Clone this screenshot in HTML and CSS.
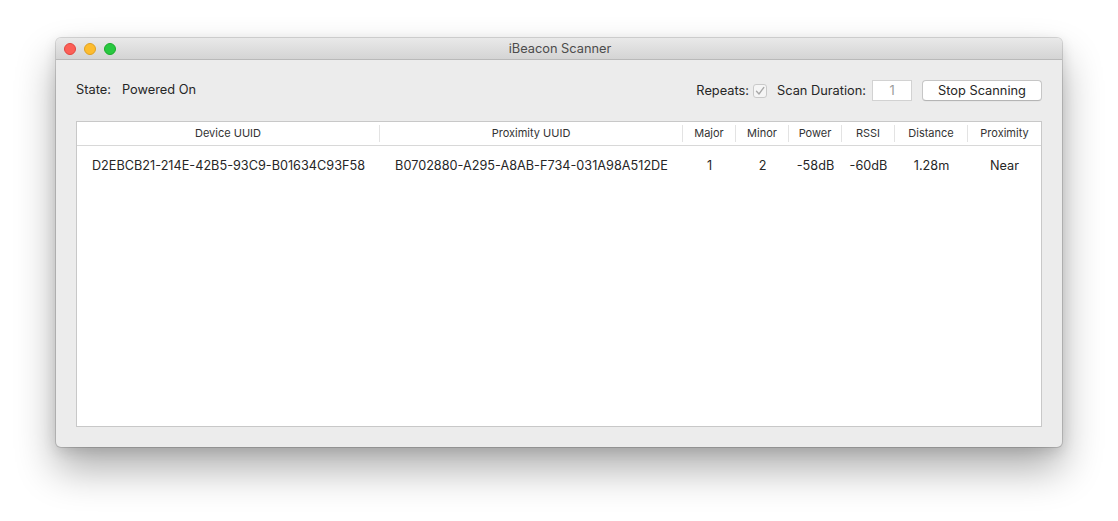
FILE: index.html
```html
<!DOCTYPE html>
<html>
<head>
<meta charset="utf-8">
<link rel="stylesheet" href="styles.css">
</head>
<body>
<div class="window">
  <div class="titlebar">
    <div class="lights">
      <span class="light red"></span>
      <span class="light yellow"></span>
      <span class="light green"></span>
    </div>
    <div class="title">iBeacon Scanner</div>
  </div>
  <div class="content">
    <div class="controls">
      <div class="state">
        <span class="label">State:</span>
        <span class="value">Powered On</span>
      </div>
      <div class="right">
        <span class="label">Repeats:</span>
        <span class="checkbox">
          <svg width="10" height="10" viewBox="0 0 10 10"><path d="M1.5 5.2 L4 8 L8.8 1.5" fill="none" stroke="#a8a8a8" stroke-width="1.3" stroke-linecap="round" stroke-linejoin="round"/></svg>
        </span>
        <span class="label dur">Scan Duration:</span>
        <span class="input">1</span>
        <button class="btn">Stop Scanning</button>
      </div>
    </div>
    <div class="table">
      <div class="row head">
        <div class="c c1">Device UUID</div>
        <div class="c c2">Proximity UUID</div>
        <div class="c c3">Major</div>
        <div class="c c4">Minor</div>
        <div class="c c5">Power</div>
        <div class="c c6">RSSI</div>
        <div class="c c7">Distance</div>
        <div class="c c8">Proximity</div>
      </div>
      <div class="row data">
        <div class="c c1">D2EBCB21-214E-42B5-93C9-B01634C93F58</div>
        <div class="c c2">B0702880-A295-A8AB-F734-031A98A512DE</div>
        <div class="c c3">1</div>
        <div class="c c4">2</div>
        <div class="c c5">-58dB</div>
        <div class="c c6">-60dB</div>
        <div class="c c7">1.28m</div>
        <div class="c c8">Near</div>
      </div>
    </div>
  </div>
</div>
</body>
</html>
```

FILE: styles.css
```css
html, body {
  margin: 0;
  padding: 0;
  background: #ffffff;
}
body {
  font-family: "Inter", "Liberation Sans", sans-serif;
  color: #262626;
  padding: 38px 0 0 56px;
  min-height: 521px;
  box-sizing: border-box;
}
.window {
  width: 1006px;
  height: 409px;
  background: #ececec;
  border-radius: 5px;
  box-shadow: 0 0 0 1px rgba(0,0,0,0.14), 0 22px 40px rgba(0,0,0,0.32), 0 4px 14px rgba(0,0,0,0.12);
  display: flex;
  flex-direction: column;
  overflow: hidden;
}
.titlebar {
  height: 21px;
  background: linear-gradient(#e9e9e9, #d4d4d4);
  border-bottom: 1px solid #b9b9b9;
  position: relative;
  display: flex;
  align-items: center;
  justify-content: center;
}
.lights {
  position: absolute;
  left: 8px;
  top: 5px;
  display: flex;
  gap: 8px;
}
.light {
  width: 12px;
  height: 12px;
  border-radius: 50%;
  box-sizing: border-box;
}
.red { background: #fc5f57; border: 0.5px solid #e1453f; }
.yellow { background: #fdbc2e; border: 0.5px solid #dea123; }
.green { background: #28c840; border: 0.5px solid #1aab2a; }
.title {
  font-size: 12.8px;
  color: #4c4c4c;
  margin-left: 2px;
}
.content {
  flex: 1;
  display: flex;
  flex-direction: column;
  padding: 20px 20px 20px 20px;
}
.controls {
  height: 21px;
  display: flex;
  align-items: center;
  justify-content: space-between;
  margin-bottom: 20px;
  font-size: 12.8px;
}
.state {
  display: flex;
  align-items: center;
  margin-top: -2px;
}
.state .label { width: 46px; }
.right {
  display: flex;
  align-items: center;
}
.checkbox {
  width: 12px;
  height: 12px;
  border: 1px solid #c9c9c9;
  border-radius: 3px;
  background: #f5f5f5;
  margin-left: 4px;
  display: flex;
  align-items: center;
  justify-content: center;
}
.dur { margin-left: 10px; }
.input {
  width: 38px;
  height: 19px;
  margin-left: 6px;
  border: 1px solid #d2d2d2;
  background: #fff;
  color: #9a9a9a;
  text-align: center;
  line-height: 19px;
  box-sizing: content-box;
}
.btn {
  margin-left: 10px;
  width: 120px;
  height: 21px;
  border: 1px solid #c6c6c6;
  border-bottom-color: #b5b5b5;
  border-radius: 4px;
  background: #ffffff;
  font-family: inherit;
  font-size: 12.8px;
  color: #262626;
  padding: 0;
  box-shadow: 0 0.5px 0 rgba(0,0,0,0.05);
}
.table {
  flex: 1;
  background: #fff;
  border: 1px solid #c8c8c8;
}
.row {
  display: flex;
}
.head {
  height: 23px;
  border-bottom: 1px solid #d8d8d8;
  font-size: 11px;
  color: #333;
  align-items: center;
}
.head .c {
  border-right: 1px solid #e3e3e3;
  height: 17px;
  line-height: 17px;
}
.head .c8 { border-right: none; }
.data {
  height: 38px;
  align-items: center;
  font-size: 12.7px;
  color: #262626;
}
.c {
  text-align: center;
  box-sizing: border-box;
  white-space: nowrap;
}
.c1 { width: 303px; }
.c2 { width: 303px; }
.c3 { width: 53px; }
.c4 { width: 53px; }
.c5 { width: 53px; }
.c6 { width: 53px; }
.c7 { width: 73px; }
.c8 { flex: 1; }
```
